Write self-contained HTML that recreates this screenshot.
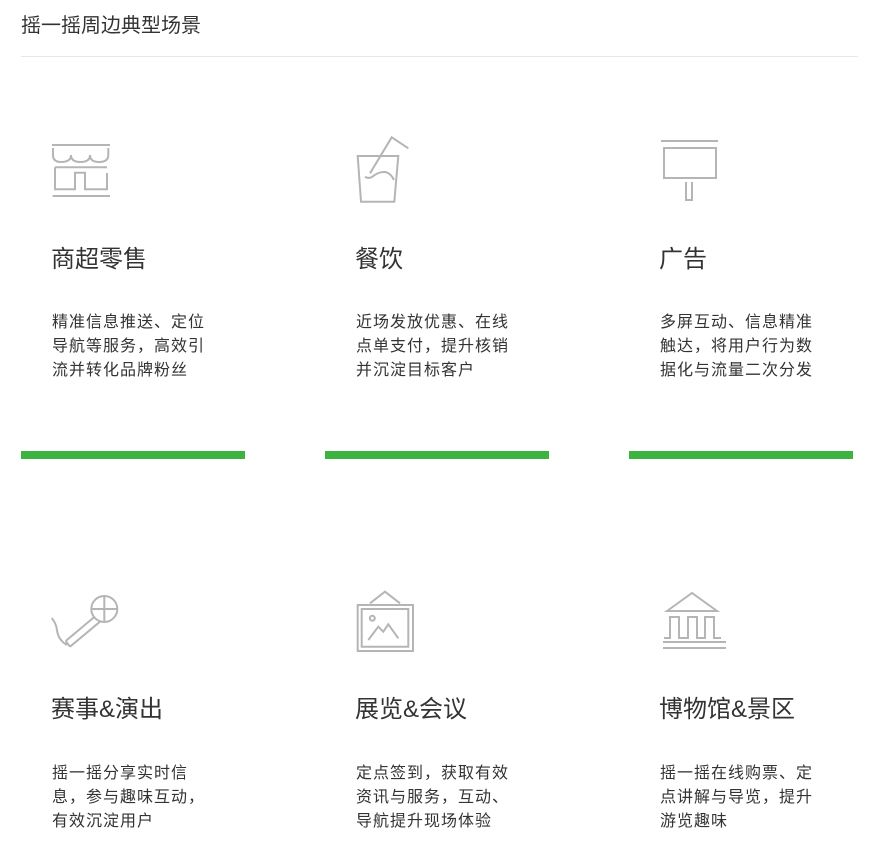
<!DOCTYPE html>
<html><head><meta charset="utf-8"><style>
body{margin:0;background:#fff;width:875px;height:850px;position:relative;overflow:hidden;font-family:"Liberation Sans","Noto Sans CJK SC",sans-serif;color:#333}
.h{position:absolute;left:21px;top:12px;font-size:20px;line-height:28px;color:#333}
.hr{position:absolute;left:21px;top:56px;width:837px;height:1px;background:#e8e8e8}
.t{position:absolute;font-size:24px;line-height:32px;color:#333}
.d{position:absolute;font-size:16px;line-height:24px;letter-spacing:1px;color:#333;width:180px}
.g{position:absolute;top:451px;width:224px;height:8px;background:#3cb340}
svg.ic{position:absolute;left:0;top:0;width:875px;height:850px}
svg path,svg circle{fill:none;stroke:#b5b5b5;stroke-width:2}
</style></head><body>
<div class="h">摇一摇周边典型场景</div>
<div class="hr"></div>

<svg class="ic" viewBox="0 0 875 850">
<path d="M52,145 H110"/>
<path d="M53,148 V155 Q53,162 61,162 Q71,162 71,155 Q71,162 80.5,162 Q90,162 90,155 Q90,162 99,162 Q108.3,162 108.3,155 V148"/>
<path d="M55,167.3 H107"/>
<path d="M55,167.3 V189.3 H75 V172.7 H85 V189.3 H107 V173"/>
<path d="M52.7,196 H110"/>
<path d="M357.7,156 H398.3 L394.3,201.7 H361 Z"/>
<path d="M370,173.3 L391.7,137.3 L408.3,148.3"/>
<path d="M365,176.7 Q368,179 372,177 Q378,172 384,172 Q390,172 394,180"/>
<path d="M661,141 H718"/>
<path d="M664,148 H716 V178 H664 Z"/>
<path d="M686,182 V200 H692 V182"/>
<circle cx="104.3" cy="609" r="13"/>
<path d="M104.3,596 V622 M91.3,609 H117.3"/>
<path d="M94.3,617 L65.7,641 M100,621.7 L70,646.7 M65.7,641 L70,646.7"/>
<path d="M67,645 Q58,640 57,630 Q56,623 51.7,618"/>
<path d="M370,603.3 L385,591.7 L400,603.3"/>
<path d="M357.7,605 H413 V651 H357.7 Z"/>
<path d="M361.7,609 H408.3 V646.7 H361.7 Z"/>
<circle cx="372.3" cy="618.3" r="2.5"/>
<path d="M368.3,640 L378.3,626.7 L383.3,631.7 L388.3,624.3 L398.3,638.3"/>
<path d="M667,611 L692,593 L717,611 Z"/>
<path d="M664,638 H670 V617 H679 V638 H688 V617 H697 V638 H705 V617 H714 V638 H721"/>
<path d="M663,642 H726 M663,648 H726"/>
</svg>

<div class="t" style="left:51px;top:244px">商超零售</div>
<div class="t" style="left:355px;top:244px">餐饮</div>
<div class="t" style="left:659px;top:244px">广告</div>
<div class="d" style="left:52px;top:311px">精准信息推送、定位<br>导航等服务，高效引<br>流并转化品牌粉丝</div>
<div class="d" style="left:356px;top:311px">近场发放优惠、在线<br>点单支付，提升核销<br>并沉淀目标客户</div>
<div class="d" style="left:660px;top:311px">多屏互动、信息精准<br>触达，将用户行为数<br>据化与流量二次分发</div>
<div class="g" style="left:21px"></div>
<div class="g" style="left:325px"></div>
<div class="g" style="left:629px"></div>

<div class="t" style="left:51px;top:694px">赛事&amp;演出</div>
<div class="t" style="left:355px;top:694px">展览&amp;会议</div>
<div class="t" style="left:659px;top:694px">博物馆&amp;景区</div>
<div class="d" style="left:52px;top:762px">摇一摇分享实时信<br>息，参与趣味互动，<br>有效沉淀用户</div>
<div class="d" style="left:356px;top:762px">定点签到，获取有效<br>资讯与服务，互动、<br>导航提升现场体验</div>
<div class="d" style="left:660px;top:762px">摇一摇在线购票、定<br>点讲解与导览，提升<br>游览趣味</div>
</body></html>
